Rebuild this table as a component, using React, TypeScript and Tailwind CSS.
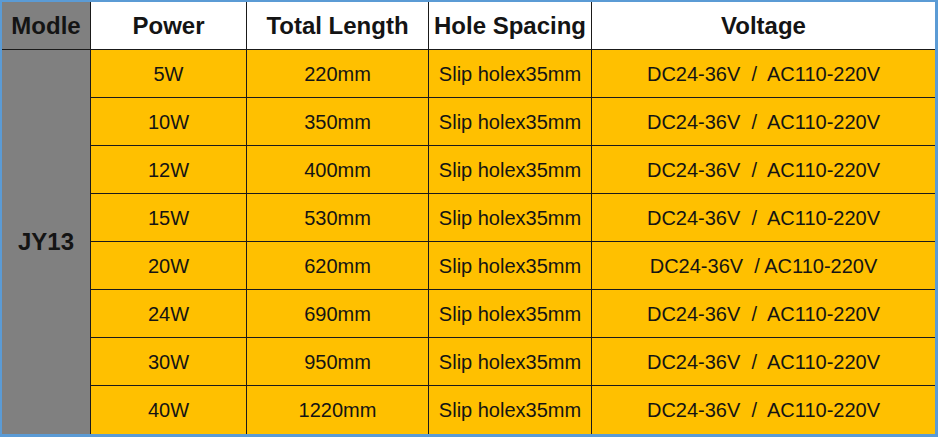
import React from "react";

const rows = [
  ["5W", "220mm", "Slip holex35mm", "DC24-36V  /  AC110-220V"],
  ["10W", "350mm", "Slip holex35mm", "DC24-36V  /  AC110-220V"],
  ["12W", "400mm", "Slip holex35mm", "DC24-36V  /  AC110-220V"],
  ["15W", "530mm", "Slip holex35mm", "DC24-36V  /  AC110-220V"],
  ["20W", "620mm", "Slip holex35mm", "DC24-36V  / AC110-220V"],
  ["24W", "690mm", "Slip holex35mm", "DC24-36V  /  AC110-220V"],
  ["30W", "950mm", "Slip holex35mm", "DC24-36V  /  AC110-220V"],
  ["40W", "1220mm", "Slip holex35mm", "DC24-36V  /  AC110-220V"],
];

export default function App() {
  return (
    <div
      className="w-[938px] h-[437px] bg-[#5b9bd5] pt-[2px] pl-[2px] pr-[3px] pb-[3px] text-[#141414]"
      style={{ fontFamily: '"Liberation Sans", Arial, sans-serif' }}
    >
      <div className="flex flex-col w-full h-full">
        <div className="flex h-[48px] text-[24px] font-bold">
          <div className="w-[89px] bg-[#808080] border-r border-b border-[#1a1a1a] flex items-center justify-center">
            Modle
          </div>
          <div className="w-[156px] bg-white border-r border-b border-[#1a1a1a] flex items-center justify-center">
            Power
          </div>
          <div className="w-[182px] bg-white border-r border-b border-[#1a1a1a] flex items-center justify-center">
            Total Length
          </div>
          <div className="w-[163px] bg-white border-r border-b border-[#1a1a1a] flex items-center justify-center">
            Hole Spacing
          </div>
          <div className="flex-1 bg-white border-b border-[#1a1a1a] flex items-center justify-center">
            Voltage
          </div>
        </div>
        <div className="flex flex-1">
          <div className="w-[89px] bg-[#808080] border-r border-[#1a1a1a] flex items-center justify-center text-[24px] font-bold">
            JY13
          </div>
          <div className="flex-1 flex flex-col bg-[#ffc000] text-[20px]">
            {rows.map((r, i) => (
              <div
                key={i}
                className={`flex h-[48px] ${i < rows.length - 1 ? "border-b border-[#1a1a1a]" : ""}`}
              >
                <div className="w-[156px] border-r border-[#1a1a1a] flex items-center justify-center">
                  {r[0]}
                </div>
                <div className="w-[182px] border-r border-[#1a1a1a] flex items-center justify-center">
                  {r[1]}
                </div>
                <div className="w-[163px] border-r border-[#1a1a1a] flex items-center justify-center">
                  {r[2]}
                </div>
                <div className="flex-1 flex items-center justify-center whitespace-pre">
                  {r[3]}
                </div>
              </div>
            ))}
          </div>
        </div>
      </div>
    </div>
  );
}
